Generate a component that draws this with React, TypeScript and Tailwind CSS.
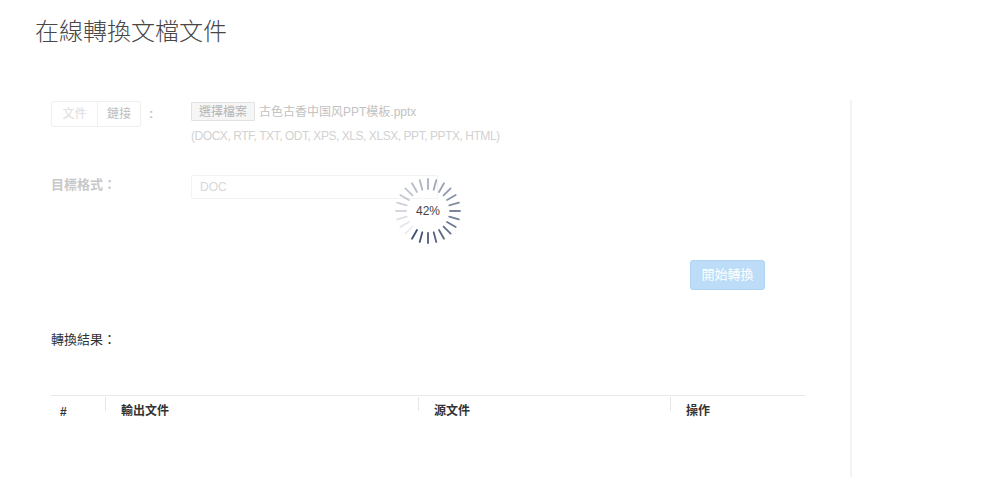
import React from "react";

const font = { fontFamily: '"Liberation Sans", "Noto Sans CJK TC", "Noto Sans CJK SC", sans-serif' };

function Spinner() {
  const ticks = [];
  for (let i = 0; i < 24; i++) {
    const a = (i * 15 * Math.PI) / 180;
    const k = (14 - i + 24) % 24;
    const op = 0.95 - (k / 23) * 0.85;
    const r1 = 22;
    const r2 = 32;
    const x1 = 35 + Math.sin(a) * r1;
    const y1 = 35 - Math.cos(a) * r1;
    const x2 = 35 + Math.sin(a) * r2;
    const y2 = 35 - Math.cos(a) * r2;
    ticks.push(
      <line key={i} x1={x1} y1={y1} x2={x2} y2={y2} stroke="#34446a" strokeWidth={1.8} strokeOpacity={op} strokeLinecap="round" />
    );
  }
  return (
    <div className="absolute left-[358px] top-[76px] w-[70px] h-[70px] flex items-center justify-center">
      <svg width="70" height="70" viewBox="0 0 70 70" className="absolute left-0 top-0">
        {ticks}
      </svg>
      <span className="relative text-[12px] text-[#444]">42%</span>
    </div>
  );
}

function HeadCell({ w, label, first }: { w: string; label: string; first?: boolean }) {
  return (
    <div className={`flex items-start ${w}`}>
      {first ? (
        <span className="ml-[9px] mt-[8px] text-[12px] leading-[16px] font-bold text-[#333]">{label}</span>
      ) : (
        <>
          <span className="w-px h-[14px] mt-[1px] bg-[#e6e6e6]" />
          <span className="ml-[15px] mt-[7px] text-[12px] leading-[16px] font-bold text-[#333]">{label}</span>
        </>
      )}
    </div>
  );
}

export default function App() {
  return (
    <div className="w-full min-h-[477px] bg-white overflow-hidden" style={font}>
      <div className="pl-[35px] pt-[18px] text-[24px] leading-[28px] font-light text-[#474747]">在線轉換文檔文件</div>
      <div className="flex ml-[35px] mt-[54px]">
        <div className="relative w-[817px] min-h-[377px] border-r-2 border-[#f3f3f3] pl-[16px] pr-[45px] pt-[1px]">
          {/* Row 1 */}
          <div className="flex">
            <div className="w-[140px] flex items-center h-[26px]">
              <div className="flex h-[26px] border border-[#f0f0f0] rounded-[2px]">
                <div className="w-[45px] flex items-center justify-center text-[12px] text-[#dcdcdc]">文件</div>
                <div className="w-[43px] flex items-center justify-center text-[12px] text-[#bdbdbd] border-l border-[#f0f0f0]">鏈接</div>
              </div>
              <span className="ml-[8px] text-[13px] text-[#c4c4c4] font-bold">:</span>
            </div>
            <div className="flex flex-col">
              <div className="flex items-center mt-[1px]">
                <div className="h-[19px] px-[7px] flex items-center border border-[#e2e2e2] bg-[#f6f6f6] text-[12px] text-[#b5b5b5] rounded-[1px]">選擇檔案</div>
                <span className="ml-[4px] text-[12px] text-[#c2c2c2]">古色古香中国风PPT模板.pptx</span>
              </div>
              <div className="mt-[7px] text-[12px] leading-[16px] text-[#d2d2d2] tracking-[-0.45px]">(DOCX, RTF, TXT, ODT, XPS, XLS, XLSX, PPT, PPTX, HTML)</div>
            </div>
          </div>
          {/* Row 2 */}
          <div className="flex mt-[31px]">
            <div className="w-[140px] h-[20px] flex items-center text-[13px] text-[#c8c8c8] font-bold">目標格式：</div>
            <div className="w-[247px] h-[24px] border border-[#f3f3f3] rounded-[2px] flex items-center pl-[8px] text-[12px] text-[#d8d8d8]">DOC</div>
          </div>
          {/* Button */}
          <div className="flex justify-end mt-[61px] pr-[40px]">
            <div className="w-[75px] h-[30px] flex items-center justify-center bg-[#bcdcf7] border border-[#aed3f3] rounded-[3px] text-[13px] text-white">開始轉換</div>
          </div>
          {/* Result */}
          <div className="mt-[40px] h-[20px] flex items-center text-[13px] text-[#333]">轉換結果：</div>
          <div className="mt-[45px] border-t border-[#e8e8e8] flex">
            <HeadCell w="w-[54px]" label="#" first />
            <HeadCell w="w-[313px]" label="輸出文件" />
            <HeadCell w="w-[252px]" label="源文件" />
            <HeadCell w="w-[135px]" label="操作" />
          </div>
          <Spinner />
        </div>
      </div>
    </div>
  );
}
